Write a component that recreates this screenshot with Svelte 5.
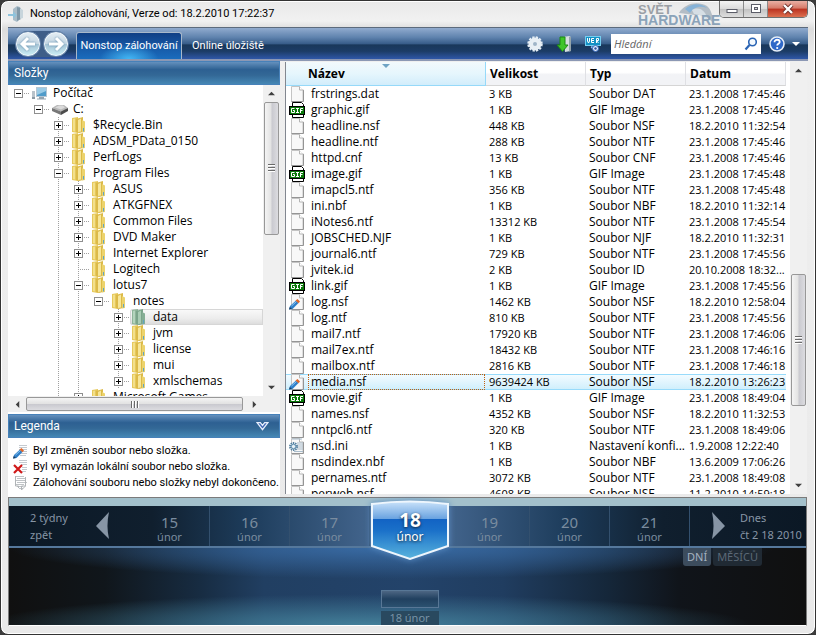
<script>
  const tree = [
    { name: 'Počítač', level: 0, state: 'open', icon: 'computer' },
    { name: 'C:', level: 1, state: 'open', icon: 'drive' },
    { name: '$Recycle.Bin', level: 2, state: 'closed' },
    { name: 'ADSM_PData_0150', level: 2, state: 'closed' },
    { name: 'PerfLogs', level: 2, state: 'closed' },
    { name: 'Program Files', level: 2, state: 'open' },
    { name: 'ASUS', level: 3, state: 'closed' },
    { name: 'ATKGFNEX', level: 3, state: 'closed' },
    { name: 'Common Files', level: 3, state: 'closed' },
    { name: 'DVD Maker', level: 3, state: 'closed' },
    { name: 'Internet Explorer', level: 3, state: 'closed' },
    { name: 'Logitech', level: 3, state: 'leaf' },
    { name: 'lotus7', level: 3, state: 'open' },
    { name: 'notes', level: 4, state: 'open' },
    { name: 'data', level: 5, state: 'closed' },
    { name: 'jvm', level: 5, state: 'closed' },
    { name: 'license', level: 5, state: 'closed' },
    { name: 'mui', level: 5, state: 'closed' },
    { name: 'xmlschemas', level: 5, state: 'closed' },
    { name: 'Microsoft Games', level: 3, state: 'closed' }
  ];

  // levels whose branch goes on below the current row
  const branchLevels = [2, 3, 5];

  const files = [
    ['frstrings.dat', '3 KB', 'Soubor DAT', '23.1.2008 17:45:46'],
    ['graphic.gif', '1 KB', 'GIF Image', '23.1.2008 17:45:46', 'gif'],
    ['headline.nsf', '448 KB', 'Soubor NSF', '18.2.2010 11:32:54'],
    ['headline.ntf', '288 KB', 'Soubor NTF', '23.1.2008 17:45:46'],
    ['httpd.cnf', '13 KB', 'Soubor CNF', '23.1.2008 17:45:46'],
    ['image.gif', '1 KB', 'GIF Image', '23.1.2008 17:45:48', 'gif'],
    ['imapcl5.ntf', '356 KB', 'Soubor NTF', '23.1.2008 17:45:48'],
    ['ini.nbf', '1 KB', 'Soubor NBF', '18.2.2010 11:32:14'],
    ['iNotes6.ntf', '13312 KB', 'Soubor NTF', '23.1.2008 17:45:54'],
    ['JOBSCHED.NJF', '1 KB', 'Soubor NJF', '18.2.2010 11:32:31'],
    ['journal6.ntf', '729 KB', 'Soubor NTF', '23.1.2008 17:45:56'],
    ['jvitek.id', '2 KB', 'Soubor ID', '20.10.2008 18:32...'],
    ['link.gif', '1 KB', 'GIF Image', '23.1.2008 17:45:56', 'gif'],
    ['log.nsf', '1462 KB', 'Soubor NSF', '18.2.2010 12:58:04', 'edited'],
    ['log.ntf', '810 KB', 'Soubor NTF', '23.1.2008 17:45:56'],
    ['mail7.ntf', '17920 KB', 'Soubor NTF', '23.1.2008 17:46:06'],
    ['mail7ex.ntf', '18432 KB', 'Soubor NTF', '23.1.2008 17:46:16'],
    ['mailbox.ntf', '2816 KB', 'Soubor NTF', '23.1.2008 17:46:18'],
    ['media.nsf', '9639424 KB', 'Soubor NSF', '18.2.2010 13:26:23', 'edited'],
    ['movie.gif', '1 KB', 'GIF Image', '23.1.2008 18:49:04', 'gif'],
    ['names.nsf', '4352 KB', 'Soubor NSF', '18.2.2010 11:32:53'],
    ['nntpcl6.ntf', '320 KB', 'Soubor NTF', '23.1.2008 18:49:06'],
    ['nsd.ini', '1 KB', 'Nastavení konfi...', '1.9.2008 12:22:40', 'ini'],
    ['nsdindex.nbf', '1 KB', 'Soubor NBF', '13.6.2009 17:06:26'],
    ['pernames.ntf', '3072 KB', 'Soubor NTF', '23.1.2008 18:49:08'],
    ['perweb.nsf', '4608 KB', 'Soubor NSF', '11.2.2010 14:59:18']
  ];

  const days = [15, 16, 17, 18, 19, 20, 21];

  let selectedFolder = $state('data');
  let selectedFile = $state('media.nsf');
  let selectedDay = $state(18);
  let query = $state('');
</script>

{#snippet pencil()}
  <path d="M0 15.500L1 12l6-5.500 2.500 2.500L3.500 15z" fill="#2f7fc8" />
  <path d="M2.500 12L7.500 7.500" stroke="#8cc4f0" />
  <path d="M6.500 6.500L8.500 5l2.500 2.500-1.500 1.800z" fill="#e0682c" />
  <path d="M0 15.500l.8-2.500L3 15z" fill="#1c3a5c" />
{/snippet}

{#snippet fileIcon(kind)}
  <svg class="icon" viewBox="0 0 16 16" aria-hidden="true">
    {#if kind === 'gif'}
      <path d="M3.500 .5h9l2 2v13h-11z" fill="#fff" stroke="#000" />
      <rect x=".5" y="4.500" width="15" height="8" fill="#087808" stroke="#000" />
      <path
        d="M5.500 6.500h-3v4h3v-2h-1.500M7 6.500h3M8.500 6.500v4M7 10.500h3M11.500 11v-4.500h2.500M11.500 8.500h2"
        fill="none"
        stroke="#fff"
      />
    {:else}
      <path d="M2.500 .5h8l3.500 3.500v11.500h-11.500z" fill="#f8f8f8" stroke="#c4c4c4" />
      <path d="M14.500 4v11.500h-12" fill="none" stroke="#949494" />
      <path d="M10.500 .5v3.500h4" fill="#fff" stroke="#b4b4b4" />
      {#if kind === 'edited'}
        {@render pencil()}
      {:else if kind === 'ini'}
        <path d="M3 1h10M8 5h6M9 7h5M9 9h5M8 11h6M5 13.500h9" stroke="#a9bccb" />
        <circle cx="4.500" cy="8.500" r="3.500" fill="#dcebf4" stroke="#55809f" stroke-width="2" stroke-dasharray="1.400 .8" />
        <circle cx="4.500" cy="8.500" r="2.200" fill="#e8f2f8" stroke="#5d8bab" />
      {/if}
    {/if}
  </svg>
{/snippet}

{#snippet treeIcon(kind, selected)}
  <svg class="icon" viewBox="0 0 16 16" aria-hidden="true">
    {#if kind === 'computer'}
      <rect x="0" y="6" width="3" height="8" fill="#b9c3cb" />
      <path d="M0 12h3v2H0z" fill="#8b9aa5" />
      <rect x="4.500" y="2.500" width="10" height="9" fill="#4f9bc9" stroke="#b4c6d4" />
      <path d="M5 3h9v3l-9 4z" fill="#9acbe6" />
      <path d="M7 12h5v1.500h2v1H5v-1h2z" fill="#93a3af" />
    {:else if kind === 'drive'}
      <path d="M0 7l5-3h7l4 3-6 4z" fill="#b8b8b8" />
      <path d="M0 7l9 3.500V14l-9-4z" fill="#777" />
      <path d="M9 10.500L16 7v3l-7 4z" fill="#4c4c4c" />
      <path d="M3 6.500l4-2h4l2 2-4 2z" fill="#dadada" />
    {:else}
      <path d="M0 1l6-1v16l-6-1z" fill={selected ? '#8fb59a' : '#e6c95c'} />
      <path d="M1 2l2-.4v13L1 14z" fill={selected ? '#b4d4bd' : '#f3e08c'} />
      <path d="M4 2l7-2v15l-4 1-3-1z" fill={selected ? '#7ba48a' : '#dcba48'} />
      <path d="M6 3l3-1.500v13L6 15z" fill={selected ? '#a9ccb4' : '#f6e69c'} />
      <path d="M10 3l3 1.500V15l-3 .5z" fill={selected ? '#86ae95' : '#ecd36c'} />
      <path d="M11.500 11v3.500" stroke="#5fa3c4" />
    {/if}
  </svg>
{/snippet}

{#snippet chevron(dir)}
  <svg class="tick" viewBox="0 0 8 8" aria-hidden="true">
    {#if dir === 'up'}<path d="M0 6l4-4 4 4z" />
    {:else if dir === 'down'}<path d="M0 2l4 4 4-4z" />
    {:else if dir === 'left'}<path d="M6 0l-4 4 4 4z" />
    {:else}<path d="M2 0l4 4-4 4z" />{/if}
  </svg>
{/snippet}

<div class="window">
  <header class="titlebar">
    <svg class="app-icon" viewBox="0 0 16 16" aria-hidden="true">
      <path d="M5 3l4-3 3 1v12l-3 3-4-2z" fill="#a9bcc8" />
      <path d="M9 1l4 1v11l-4 2z" fill="#7f98a8" />
      <path d="M12 2l3 2v8l-3 1z" fill="#c8d5dc" />
      <path d="M0 8h5V5.500l4 3.500-4 3.500V10H0z" fill="#8ec3dc" />
    </svg>
    <h1>Nonstop zálohování, Verze od: 18.2.2010 17:22:37</h1>
    <div class="watermark">
      <svg viewBox="0 0 40 28" aria-hidden="true">
        <path d="M3 12C9 2 22 0 31 5c5 4 5 11 8 19-6-7-12-11-20-10z" fill="#9caab6" />
        <path d="M9 8C16 2 25 2 31 7c-8-3-14 0-17 5z" fill="#5b9bd0" />
        <path d="M16 9c8-4 14 1 16 11-5-5-9-7-14-7z" fill="#cdd9e2" />
      </svg>
      <span class="svet">SVĚT</span>
      <span class="hardware">HARDWARE</span>
    </div>
    <div class="win-buttons">
      <button aria-label="Minimalizovat">
        <svg viewBox="0 0 12 12"><rect x="1" y="6.500" width="10" height="3" fill="#fff" stroke="#5b5d68" /></svg>
      </button>
      <button aria-label="Maximalizovat">
        <svg viewBox="0 0 12 12">
          <rect x="1.500" y="1.500" width="9" height="8" fill="#fff" stroke="#5b5d68" />
          <rect x="4.500" y="4.500" width="3" height="2" fill="#d4d4d8" stroke="#5b5d68" />
        </svg>
      </button>
      <button class="close" aria-label="Zavřít">
        <svg viewBox="0 0 12 12">
          <path d="M2 2l8 8M10 2l-8 8" stroke="#6d2f2a" stroke-width="4" />
          <path d="M2 2l8 8M10 2l-8 8" stroke="#fff" stroke-width="2.400" />
        </svg>
      </button>
    </div>
  </header>

  <div class="toolbar">
    <div class="nav-buttons">
      <button aria-label="Zpět">
        <svg viewBox="0 0 24 24"><path d="M19 12H7M12 6l-6 6 6 6" /></svg>
      </button>
      <button aria-label="Vpřed">
        <svg viewBox="0 0 24 24"><path d="M5 12h12M12 6l6 6-6 6" /></svg>
      </button>
    </div>
    <nav class="tabs">
      <button class="tab active">Nonstop zálohování</button>
      <button class="tab">Online úložiště</button>
    </nav>
    <div class="tools">
      <button aria-label="Nastavení">
        <svg viewBox="0 0 16 16">
          <circle cx="8" cy="8" r="6.500" fill="#e4edf4" stroke="#e4edf4" stroke-width="2.500" stroke-dasharray="2.200 1.200" />
          <circle cx="8" cy="8" r="6" fill="#e8eff5" />
          <circle cx="8" cy="8" r="2" fill="#9fb4c7" />
        </svg>
      </button>
      <button aria-label="Obnovit soubory">
        <svg viewBox="0 0 16 16">
          <path d="M7 1l6-1 2 1v14l-6 1z" fill="#d5dde0" />
          <path d="M13 1h2v14l-2 .5z" fill="#94a4aa" />
          <path d="M4 1h5v8h3l-5.500 6.500L1 9h3z" fill="#3fc52a" stroke="#1d8a12" />
        </svg>
      </button>
      <button aria-label="Verze">
        <svg viewBox="0 0 16 16">
          <rect x=".5" y=".5" width="15" height="9" fill="#1491c4" stroke="#74cdf0" />
          <path d="M2.500 2v3l1 2 1-2v-3M9 2.500h-2.500v4H9M6.500 4.500H9M11.500 7V2.500h2v2h-2l2 2.500" fill="none" stroke="#fff" />
          <path d="M6 11l3 1" stroke="#8fb5ef" stroke-width="2" />
          <circle cx="10.500" cy="12.500" r="3" fill="#e3ecfb" stroke="#3565b8" />
          <circle cx="10.500" cy="12.500" r="1.200" fill="#2850a0" />
        </svg>
      </button>
    </div>
    <label class="search">
      <input type="text" placeholder="Hledání" aria-label="Hledání" bind:value={query} />
      <svg viewBox="0 0 14 14" aria-hidden="true">
        <circle cx="8.500" cy="5" r="3.800" fill="#f4faff" stroke="#2a64b4" stroke-width="1.600" />
        <path d="M5.500 8L1.500 12.500" stroke="#2a64b4" stroke-width="2.200" />
      </svg>
    </label>
    <button class="help" aria-label="Nápověda">
      <svg viewBox="0 0 16 16">
        <circle cx="8" cy="8" r="7" fill="#2f68c8" stroke="#e6eef8" stroke-width="1.600" />
        <path d="M5.500 6.200c0-3.400 5.200-3 5.200-.3 0 1.800-2.500 1.900-2.500 3.600" fill="none" stroke="#fff" stroke-width="1.800" />
        <circle cx="8.200" cy="12" r="1.100" fill="#fff" />
      </svg>
    </button>
    <button class="more" aria-label="Další">{@render chevron('down')}</button>
  </div>

  <main class="main">
    <aside class="sidebar">
      <h2 class="panel-title">Složky</h2>
      <div class="tree-area">
        <ul class="tree">
          {#each tree as node}
            <li class="node">
              {#each Array(node.level) as _, level}
                <span class="guide" class:line={branchLevels.includes(level)}></span>
              {/each}
              <span class="guide own" class:line={branchLevels.includes(node.level)}>
                {#if node.state !== 'leaf'}
                  <button
                    class="expander"
                    class:open={node.state === 'open'}
                    aria-label="{node.state === 'open' ? 'Sbalit' : 'Rozbalit'} {node.name}"
                  ></button>
                {/if}
              </span>
              <button
                class="folder"
                class:selected={selectedFolder === node.name}
                onclick={() => (selectedFolder = node.name)}
              >
                {@render treeIcon(node.icon, selectedFolder === node.name)}
                <span>{node.name}</span>
              </button>
            </li>
          {/each}
        </ul>
        <div class="scroll-v">
          <button aria-label="Nahoru">{@render chevron('up')}</button>
          <div class="track">
            <div class="thumb tree-thumb"><i></i></div>
          </div>
          <button aria-label="Dolů">{@render chevron('down')}</button>
        </div>
      </div>
      <div class="scroll-h">
        <button aria-label="Doleva">{@render chevron('left')}</button>
        <div class="thumb"><i></i></div>
        <button aria-label="Doprava">{@render chevron('right')}</button>
      </div>

      <h2 class="panel-title legend-title">
        Legenda
        <button aria-label="Sbalit legendu">
          <svg viewBox="0 0 12 10">
            <path d="M1 1.500h3l2 2.500 2-2.500h3L6 8z" fill="#3c66b4" stroke="#e6eefc" stroke-width="1.200" />
          </svg>
        </button>
      </h2>
      <ul class="legend">
        <li>
          <svg class="icon" viewBox="0 0 16 16" aria-hidden="true">
            <path d="M6 2.500h8M6 4.500h8M6 6.500h8M8 8.500h6M7 10.500h7M7 12.500h6" stroke="#c4cad0" />
            {@render pencil()}
          </svg>
          Byl změněn soubor nebo složka.
        </li>
        <li>
          <svg class="icon" viewBox="0 0 16 16" aria-hidden="true">
            <path d="M6 1.500h8M6 3.500h8M8 5.500h6M9 8.500h5M9 10.500h5M9 12.500h4" stroke="#c4cad0" />
            <path d="M1 6l8 8M9 6l-8 8" stroke="#d01818" stroke-width="2.200" />
          </svg>
          Byl vymazán lokální soubor nebo složka.
        </li>
        <li>
          <svg class="icon" viewBox="0 0 16 16" aria-hidden="true">
            <path d="M2 1.500h9M4 3.500h9M2 5.500h11M4 7.500h10M2 9.500h9M4 11.500h6M6 13.500h4" stroke="#bfc3c6" />
            <path d="M12.500 2v9l-4 4v-4h4M2.500 1v10h3v2" fill="none" stroke="#b0b4b7" />
          </svg>
          Zálohování souboru nebo složky nebyl dokončeno.
        </li>
      </ul>
    </aside>

    <section class="list">
      <div class="table-wrap">
        <table>
          <colgroup>
            <col />
            <col class="narrow" />
            <col class="narrow" />
            <col class="narrow" />
          </colgroup>
          <thead>
            <tr>
              <th class="sorted">Název<span class="sort">{@render chevron('down')}</span></th>
              <th>Velikost</th>
              <th>Typ</th>
              <th>Datum</th>
            </tr>
          </thead>
          <tbody>
            {#each files as [name, size, type, date, kind]}
              <tr class:selected={selectedFile === name} onclick={() => (selectedFile = name)}>
                <td class="name">
                  <div class="name-cell">
                    {@render fileIcon(kind)}
                    <span>{name}</span>
                  </div>
                </td>
                <td class="num">{size}</td>
                <td>{type}</td>
                <td class="num">{date}</td>
              </tr>
            {/each}
          </tbody>
        </table>
      </div>
      <div class="scroll-v">
        <button aria-label="Nahoru">{@render chevron('up')}</button>
        <div class="track list-track">
          <div class="thumb list-thumb"><i></i></div>
        </div>
        <button aria-label="Dolů">{@render chevron('down')}</button>
      </div>
    </section>
  </main>

  <footer class="timeline">
    <div class="strip">
      <div class="edge">
        <span>2 týdny<br />zpět</span>
        <button class="arrow" aria-label="Předchozí">
          <svg viewBox="0 0 14 28"><path d="M13 0Q10 14 13 27L0 14z" /></svg>
        </button>
      </div>
      {#each days as day}
        <button class="day" class:current={selectedDay === day} onclick={() => (selectedDay = day)}>
          {#if selectedDay === day}
            <svg class="shield" viewBox="0 0 80 62" aria-hidden="true">
              <defs>
                <linearGradient id="gloss" x1="0" y1="0" x2="0" y2="1">
                  <stop offset="0" stop-color="#c9e2fa" />
                  <stop offset=".3" stop-color="#6aa3e0" />
                  <stop offset=".31" stop-color="#1263c4" />
                  <stop offset=".5" stop-color="#1a70c9" />
                  <stop offset="1" stop-color="#5ab4dd" />
                </linearGradient>
              </defs>
              <path d="M2 5Q40 0 78 5V47L40 60 2 47Z" fill="url(#gloss)" stroke="#eef6fd" stroke-width="2" />
            </svg>
          {/if}
          <strong>{day}</strong>
          <span>únor</span>
        </button>
      {/each}
      <div class="edge">
        <button class="arrow" aria-label="Další den">
          <svg viewBox="0 0 14 28"><path d="M1 0Q4 14 1 27L14 14z" /></svg>
        </button>
        <span>Dnes<br />čt 2 18 2010</span>
      </div>
    </div>
    <div class="stage">
      <div class="units">
        <button class="active">DNÍ</button>
        <button>MĚSÍCŮ</button>
      </div>
      <div class="marker">
        <div class="bar"></div>
        <span>18 únor</span>
      </div>
    </div>
  </footer>
</div>

<style>
  :global(body) {
    margin: 0;
    background: #3b3b3b;
  }

  * {
    box-sizing: border-box;
  }

  button {
    padding: 0;
    border: none;
    background: none;
    color: inherit;
    font: inherit;
    cursor: pointer;
  }

  h1, h2, ul {
    margin: 0;
    padding: 0;
    font-size: 12px;
    font-weight: 400;
    list-style: none;
  }

  .window {
    display: flex;
    flex-direction: column;
    height: 100vh;
    padding: 0 7px 8px 7px;
    overflow: hidden;
    border: 1px solid #333;
    border-radius: 8px;
    background: linear-gradient(#e9e9e9, #f1f1f1 20px, #dcdcdc 28px, #efefef 60px, #e9e9e9);
    box-shadow: inset 0 0 0 1px #fff;
    color: #000;
    font-family: 'Open Sans', 'Noto Sans', sans-serif;
    font-size: 12px;
    line-height: 16px;
  }

  .icon {
    flex: none;
    width: 16px;
    height: 16px;
  }

  .tick {
    display: block;
    width: 8px;
    height: 8px;
    fill: #404040;
  }

  /* title bar */
  .titlebar {
    position: relative;
    display: flex;
    flex: none;
    align-items: center;
    height: 26px;
  }

  .titlebar h1 {
    font-family: Roboto, sans-serif;
    font-size: 11px;
  }

  .app-icon {
    width: 16px;
    height: 16px;
    margin-right: 6px;
  }

  .watermark {
    position: absolute;
    top: 4px;
    right: 88px;
    width: 82px;
    color: #8ba3b9;
    font-family: 'Liberation Sans', sans-serif;
    font-weight: 700;
    line-height: 10px;
  }

  .watermark svg {
    position: absolute;
    top: -4px;
    right: 4px;
    width: 40px;
    height: 28px;
    opacity: 0.7;
  }

  .watermark span {
    position: relative;
    display: block;
  }

  .svet {
    color: #9a9fa5;
    font-size: 13px;
  }

  .hardware {
    font-size: 14px;
  }

  .win-buttons {
    display: flex;
    align-self: flex-start;
    height: 17px;
    margin-left: auto;
    overflow: hidden;
    border: 1px solid #6f6f6f;
    border-top: none;
    border-radius: 0 0 5px 5px;
  }

  .win-buttons button {
    display: flex;
    align-items: center;
    justify-content: center;
    width: 24px;
    border-right: 1px solid #8a8a8a;
    background: linear-gradient(#f4f4f4, #dadada 50%, #c2c2c2 51%, #dedede);
  }

  .win-buttons .close {
    width: 39px;
    border-right: none;
    background: linear-gradient(#eab0a4, #d67a68 45%, #bb3220 50%, #dd7050);
  }

  .win-buttons svg {
    width: 12px;
    height: 12px;
  }

  /* toolbar */
  .toolbar {
    display: flex;
    flex: none;
    align-items: center;
    height: 34px;
    padding-left: 7px;
    border-top: 1px solid #5c6b7d;
    border-bottom: 2px solid #8c98b4;
    background: linear-gradient(#91abce, #5f83ae 30%, #355a87 52%, #19375a 54%, #1c3c66 75%, #2f57a8);
    color: #fff;
  }

  .nav-buttons {
    display: flex;
    gap: 2px;
    border-radius: 14px;
    background: #3f5e88;
  }

  .nav-buttons button {
    width: 26px;
    height: 26px;
    border: 1px solid #6785ab;
    border-radius: 50%;
    background: linear-gradient(#e6eff5, #c3d5e2 50%, #a4c3d5 52%, #cdf0f7);
    box-shadow: inset 0 0 0 1px #f2f8fb;
  }

  .nav-buttons svg {
    display: block;
    width: 24px;
    height: 24px;
    fill: none;
    stroke: #fff;
    stroke-width: 3;
    filter: drop-shadow(0 0 1px #5f8cac);
  }

  .tabs {
    display: flex;
    align-self: flex-end;
    margin-left: 7px;
    font-family: Roboto, sans-serif;
  }

  .tab {
    height: 27px;
    padding: 0 10px;
    font-size: 11px;
    white-space: nowrap;
  }

  .tab.active {
    width: 106px;
    padding: 0;
    border: 1px solid #a8b8ca;
    border-bottom: none;
    border-radius: 3px 3px 0 0;
    background: radial-gradient(ellipse at bottom, #43b6f4, transparent 40%), linear-gradient(#103f85, #1657a4 50%, #1a6cbd);
  }

  .tools {
    display: flex;
    gap: 13px;
    margin-left: auto;
  }

  .tools button, .help {
    flex: none;
    width: 16px;
    height: 16px;
  }

  .tools svg, .help svg {
    display: block;
    width: 16px;
    height: 16px;
  }

  .search {
    display: flex;
    align-items: center;
    width: 150px;
    height: 20px;
    margin-left: 10px;
    padding: 0 3px;
    background: #fff;
  }

  .search input {
    flex: 1;
    min-width: 0;
    padding: 0;
    border: none;
    outline: none;
    background: none;
    font-family: inherit;
    font-size: 11px;
    font-style: italic;
  }

  .search input::placeholder {
    color: #666;
  }

  .search svg {
    width: 14px;
    height: 14px;
  }

  .help {
    margin-left: 8px;
  }

  .more {
    margin: 0 8px 0 7px;
  }

  .more .tick {
    fill: #fff;
  }

  /* main area */
  .main {
    display: flex;
    flex: 1;
    gap: 5px;
    min-height: 0;
  }

  .sidebar {
    display: flex;
    flex: none;
    flex-direction: column;
    width: 272px;
    background: #fff;
  }

  .panel-title {
    display: flex;
    flex: none;
    align-items: center;
    justify-content: space-between;
    height: 24px;
    padding: 0 10px 0 5px;
    border: 1px solid #4781b9;
    background: linear-gradient(#6490bd, #2d6092 35%, #336896 60%, #4587b4);
    color: #fff;
    font-family: Roboto, sans-serif;
    font-size: 12px;
  }

  .legend-title {
    margin-top: 2px;
  }

  .legend-title svg {
    display: block;
    width: 13px;
    height: 11px;
  }

  .tree-area {
    display: flex;
    flex: 1;
    min-height: 0;
  }

  .tree {
    flex: 1;
    overflow: hidden;
  }

  .node {
    display: flex;
    height: 16px;
  }

  .guide {
    display: flex;
    flex: none;
    align-items: center;
    width: 20px;
    padding-left: 6px;
  }

  .guide.line {
    background: repeating-linear-gradient(#a0a0a0 0 1px, transparent 1px 2px) 10px 0 / 1px 100% no-repeat;
  }

  .guide.own {
    width: 22px;
    background-image: repeating-linear-gradient(90deg, #a0a0a0 0 1px, transparent 1px 2px);
    background-position: 10px 8px;
    background-repeat: no-repeat;
    background-size: 12px 1px;
  }

  .guide.own.line {
    background-image: repeating-linear-gradient(90deg, #a0a0a0 0 1px, transparent 1px 2px),
      repeating-linear-gradient(#a0a0a0 0 1px, transparent 1px 2px);
    background-position: 10px 8px, 10px 0;
    background-size: 12px 1px, 1px 100%;
  }

  .expander {
    width: 9px;
    height: 9px;
    border: 1px solid #8f8f8f;
    background: linear-gradient(#000, #000) center / 5px 1px no-repeat,
      linear-gradient(#000, #000) center / 1px 5px no-repeat, #fff;
  }

  .expander.open {
    background: linear-gradient(#000, #000) center / 5px 1px no-repeat, #fff;
  }

  .folder {
    display: flex;
    flex: 1;
    gap: 5px;
    min-width: 0;
    padding-left: 2px;
    text-align: left;
    white-space: nowrap;
  }

  .folder.selected {
    border-radius: 3px 0 0 3px;
    background: linear-gradient(#fafafa, #ececec 60%, #dadada);
    box-shadow: inset 0 0 0 1px #d6d6d6;
  }

  /* scroll bars */
  .scroll-v {
    display: flex;
    flex: none;
    flex-direction: column;
    width: 17px;
    padding: 0 1px;
    background: #f0f0f0;
  }

  .scroll-v button {
    display: flex;
    align-items: center;
    justify-content: center;
    height: 17px;
  }

  .scroll-v .tick, .scroll-h .tick {
    width: 7px;
    height: 7px;
  }

  .track {
    display: flex;
    flex: 1;
    flex-direction: column;
  }

  .thumb {
    display: flex;
    align-items: center;
    justify-content: center;
    border: 1px solid #989898;
    border-radius: 2px;
    background: linear-gradient(90deg, #f4f4f4, #e2e2e2 48%, #c9c9cf 52%, #dcdce0);
  }

  .thumb i {
    width: 7px;
    height: 8px;
    background: repeating-linear-gradient(#6a6a6a 0 1px, #fff 1px 2px, transparent 2px 3px);
  }

  .tree-thumb {
    height: 48%;
  }

  .list-track {
    justify-content: flex-end;
    padding-bottom: 71px;
  }

  .list-thumb {
    height: 132px;
  }

  .scroll-h {
    display: flex;
    flex: none;
    height: 16px;
    padding-right: 17px;
    background: #f0f0f0;
  }

  .scroll-h button {
    display: flex;
    align-items: center;
    justify-content: center;
    width: 18px;
  }

  .scroll-h .thumb {
    flex: 1;
    margin: 1px 2px 1px 0;
    background: linear-gradient(#f4f4f4, #e2e2e2 48%, #c9c9cf 52%, #dcdce0);
  }

  .scroll-h .thumb i {
    width: 8px;
    height: 7px;
    background: repeating-linear-gradient(90deg, #6a6a6a 0 1px, #fff 1px 2px, transparent 2px 3px);
  }

  .legend {
    flex: none;
    height: 59px;
    padding: 5px 0 0 5px;
    font-family: Roboto, sans-serif;
  }

  .legend li {
    display: flex;
    gap: 4px;
    font-size: 11px;
    white-space: nowrap;
  }

  /* file list */
  .list {
    display: flex;
    flex: 1;
    min-width: 0;
    margin: 1px 1px 3px 0;
    border-left: 1px solid #828790;
    background: #fff;
  }

  .table-wrap {
    flex: 1;
    overflow: hidden;
    padding-right: 4px;
  }

  table {
    width: 100%;
    border-collapse: separate;
    border-spacing: 0;
    table-layout: fixed;
  }

  .narrow {
    width: 100px;
  }

  th {
    position: relative;
    height: 24px;
    padding: 0 0 0 4px;
    border-right: 1px solid #dfe0e4;
    border-bottom: 1px solid #d5d5d5;
    background: linear-gradient(#fff 45%, #f2f3f6 55%);
    font-weight: 700;
    text-align: left;
  }

  th.sorted {
    padding-left: 22px;
    border-color: #96d9f9;
    background: linear-gradient(#f2f9fc, #e6f6fd 50%, #d2edfb);
  }

  .sort {
    position: absolute;
    top: 0;
    left: 48%;
  }

  .sort .tick {
    fill: #6fa3c4;
  }

  td {
    height: 16px;
    padding: 0 0 0 3px;
    overflow: hidden;
    white-space: nowrap;
  }

  td.name {
    padding: 0 1px 0 3px;
  }

  .name-cell {
    display: flex;
    gap: 3px;
    height: 16px;
  }

  .name-cell span {
    flex: 1;
    padding-left: 3px;
  }

  td.num {
    font-size: 11px;
  }

  tr.selected td {
    background: linear-gradient(#98dbfb 0 1px, #f2fbff 1px, #e2f5fe 50%, #d0effc 15px, #98dbfb 15px);
  }

  tr.selected .name-cell span {
    outline: 1px dotted #c06010;
    outline-offset: -1px;
  }

  /* timeline */
  .timeline {
    flex: none;
    margin-right: 1px;
    border: 1px solid #7b7b7b;
    border-bottom-color: #fff;
    background: #0f1316;
    color: #8795a5;
    font-family: 'Noto Sans', sans-serif;
  }

  .strip {
    display: grid;
    grid-template-columns: 121px repeat(7, 1fr) 116px;
    height: 50px;
    border-top: 8px solid #a3c0cb;
    border-bottom: 2px solid #55789c;
    background: linear-gradient(90deg, #0b1825, #101f2e 18%, #1d3c5b 30%, #42648c 45%, #42648c 55%, #1d3c5b 70%, #101f2e 82%, #0b1825);
  }

  .edge {
    display: flex;
    align-items: center;
    justify-content: space-between;
    padding: 0 20px 0 21px;
    font-size: 11px;
    line-height: 17px;
    white-space: nowrap;
  }

  .edge:last-child {
    gap: 15px;
    justify-content: flex-start;
    padding-right: 0;
  }

  .arrow svg {
    display: block;
    width: 14px;
    height: 28px;
    fill: #8795a5;
  }

  .day {
    position: relative;
    display: flex;
    flex-direction: column;
    align-items: center;
    padding-top: 9px;
    border-right: 1px solid #33506e;
    color: #7a8c9f;
    font-size: 11px;
    line-height: 14px;
  }

  .day strong {
    font-size: 15px;
    font-weight: 400;
    line-height: 15px;
  }

  .day strong, .day span {
    position: relative;
  }

  .day.current {
    padding-top: 4px;
    border-right: none;
    color: #fff;
    font-size: 12px;
    text-shadow: 0 1px 3px #123;
  }

  .day.current strong {
    font-size: 19px;
    font-weight: 700;
    line-height: 20px;
  }

  .shield {
    position: absolute;
    top: -7px;
    left: 0;
    width: 100%;
    height: 62px;
    filter: drop-shadow(0 0 3px #5c8ec4);
  }

  .stage {
    display: flex;
    flex-direction: column;
    align-items: center;
    justify-content: space-between;
    height: 77px;
    background: radial-gradient(ellipse 48% 40% at 48% 0, #396ba4, transparent),
      radial-gradient(ellipse 48% 40% at 45% 100%, #437f99, transparent),
      linear-gradient(90deg, #101010, #10161b 12%, #172c42 24%, #213f62 32%, #23436a 50%, #203d60 62%, #15273a 75%, #10141a 84%, #101010);
  }

  .units {
    display: flex;
    align-self: flex-end;
    gap: 2px;
    margin-right: 44px;
    font-size: 11px;
    line-height: 18px;
  }

  .units button {
    padding: 0 4px;
    border-radius: 0 0 3px 3px;
    background: #202a34;
    color: #5b6876;
  }

  .units .active {
    background: #3c4c5d;
    color: #a5b2c0;
  }

  .marker {
    display: flex;
    flex-direction: column;
    gap: 3px;
    width: 58px;
    margin-left: 4px;
    font-size: 11px;
    line-height: 14px;
    text-align: center;
  }

  .bar {
    height: 18px;
    border: 1px solid #587796;
    background: linear-gradient(#4d6683, #21405f 50%, #2b5170);
  }

  .marker span {
    background: #29495f;
    color: #7893a6;
  }
</style>
